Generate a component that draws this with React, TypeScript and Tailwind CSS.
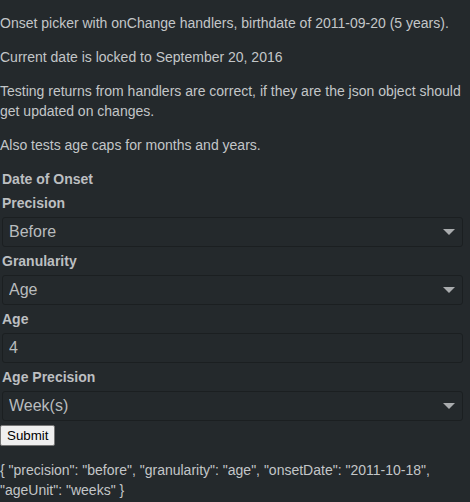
import React, { useState } from 'react';

const font = { fontFamily: '"Liberation Sans", Arial, sans-serif' };

const Caret = () => (
  <span className="pointer-events-none absolute right-[8px] top-[12px] h-0 w-0 border-x-[6px] border-t-[6px] border-x-transparent border-t-[#a9acae]" />
);

interface SelectProps {
  value: string;
  options: { value: string; label: string }[];
  onChange: (v: string) => void;
}

const Select: React.FC<SelectProps> = ({ value, options, onChange }) => (
  <div className="relative ml-[2px] w-[461px]">
    <select
      value={value}
      onChange={(e) => onChange(e.target.value)}
      className="block h-[30px] w-full appearance-none rounded-[3px] border border-[#1b1f21] bg-[#24292c] px-[6px] text-[16px] text-[#b9bcbe] outline-none"
    >
      {options.map((o) => (
        <option key={o.value} value={o.value}>
          {o.label}
        </option>
      ))}
    </select>
    <Caret />
  </div>
);

const Label: React.FC<{ children: React.ReactNode }> = ({ children }) => (
  <label className="ml-[2px] mt-[4px] mb-[4px] block h-[20px] text-[14px] font-bold leading-[20px] text-[#bcbfc1]">
    {children}
  </label>
);

export default function App() {
  const [precision, setPrecision] = useState('before');
  const [granularity, setGranularity] = useState('age');
  const [age, setAge] = useState('4');
  const [ageUnit, setAgeUnit] = useState('weeks');

  return (
    <div className="h-[502px] w-[470px] overflow-hidden bg-[#24292c] text-[14px] leading-[20px] text-[#c3c6c8]" style={font}>
      <div className="pt-[13px]">
        <p className="mb-[14px]">Onset picker with onChange handlers, birthdate of 2011-09-20 (5 years).</p>
        <p className="mb-[14px]">Current date is locked to September 20, 2016</p>
        <p className="mb-[14px]">
          Testing returns from handlers are correct, if they are the json object should get updated on changes.
        </p>
        <p className="mb-[14px]">Also tests age caps for months and years.</p>
      </div>

      <form onSubmit={(e) => e.preventDefault()}>
        <div className="ml-[2px] mb-[2px] h-[20px] text-[14px] font-bold leading-[20px] text-[#bcbfc1]">Date of Onset</div>
        <Label>Precision</Label>
        <Select
          value={precision}
          onChange={setPrecision}
          options={[
            { value: 'before', label: 'Before' },
            { value: 'after', label: 'After' },
            { value: 'exact', label: 'Exact' },
          ]}
        />
        <Label>Granularity</Label>
        <Select
          value={granularity}
          onChange={setGranularity}
          options={[
            { value: 'age', label: 'Age' },
            { value: 'date', label: 'Date' },
          ]}
        />
        <Label>Age</Label>
        <input
          value={age}
          onChange={(e) => setAge(e.target.value)}
          className="ml-[2px] block h-[30px] w-[461px] rounded-[3px] border border-[#1b1f21] bg-[#24292c] px-[6px] text-[16px] text-[#b9bcbe] outline-none"
        />
        <Label>Age Precision</Label>
        <Select
          value={ageUnit}
          onChange={setAgeUnit}
          options={[
            { value: 'days', label: 'Day(s)' },
            { value: 'weeks', label: 'Week(s)' },
            { value: 'months', label: 'Month(s)' },
            { value: 'years', label: 'Year(s)' },
          ]}
        />
        <button
          type="submit"
          className="mt-[4px] block h-[21px] rounded-[2px] border border-[#767676] bg-[#efefef] px-[6px] text-[13.33px] leading-[15px] text-black"
        >
          Submit
        </button>
      </form>

      <p className="mt-[14px]">
        {'{ "precision": "before", "granularity": "age", "onsetDate": "2011-10-18", "ageUnit": "weeks" }'}
      </p>
    </div>
  );
}
